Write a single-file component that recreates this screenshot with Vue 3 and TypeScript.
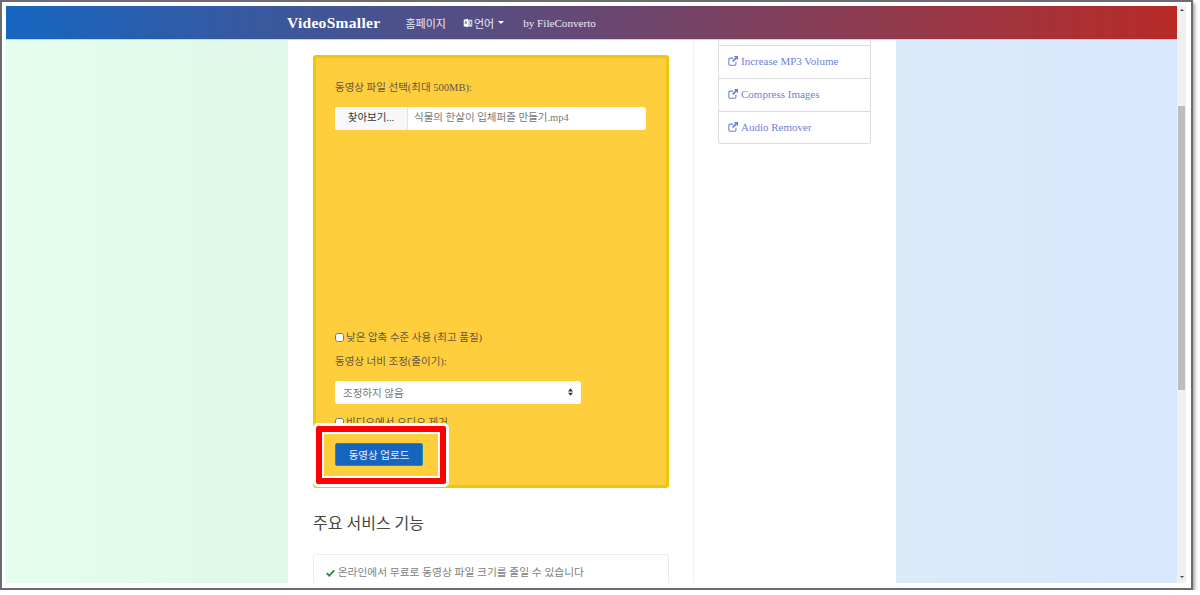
<script setup lang="ts">
const links: string[] = ['Increase MP3 Volume', 'Compress Images', 'Audio Remover']
</script>

<template>
  <div class="window">
    <div class="viewport">
      <div class="page">
        <nav class="navbar">
          <a class="brand">VideoSmaller</a>
          <a class="nav-link home">홈페이지</a>
          <a class="nav-link lang">
            <svg class="lang-icon" viewBox="0 0 14 12" width="10" height="10">
              <path d="M1 1.5 7 0v12L1 10.5z" fill="#fff" />
              <path d="M7 1.5h6v9.5H7z" fill="#d9dcec" />
              <path d="M2.6 7.6 4 3.4l1.4 4.2M9 4.4h3M11 4.4c-.2 2-1 3.4-2 4M9.8 5.6c.5 1.3 1.2 2.2 2.4 2.8" fill="none" stroke="#4a4470" stroke-width=".9" />
            </svg>
            언어
            <span class="caret"></span>
          </a>
          <a class="nav-link by">by FileConverto</a>
        </nav>
        <div class="columns">
          <div class="side-left"></div>
          <div class="center">
            <main class="main">
              <form class="card" @submit.prevent>
                <label class="label first">동영상 파일 선택(최대 500MB):</label>
                <div class="file-input">
                  <span class="browse">찾아보기...</span>
                  <span class="file-name">식물의 한살이 입체퍼즐 만들기.mp4</span>
                </div>
                <label class="check-row low">
                  <input type="checkbox" class="check" />
                  <span>낮은 압축 수준 사용 (최고 품질)</span>
                </label>
                <label class="label width">동영상 너비 조정(줄이기):</label>
                <div class="select">
                  <span>조정하지 않음</span>
                  <svg viewBox="0 0 8 12" width="5" height="8"><path d="M4 0 8 5H0zM4 12 0 7h8z" fill="#333" /></svg>
                </div>
                <label class="check-row audio">
                  <input type="checkbox" class="check" />
                  <span>비디오에서 오디오 제거</span>
                </label>
                <button class="upload" type="button">동영상 업로드</button>
              </form>
              <h2 class="heading">주요 서비스 기능</h2>
              <div class="feature">
                <svg class="tick" viewBox="0 0 12 10" width="9" height="8"><path d="M1 5.2 4.4 8.6 11 1.6" fill="none" stroke="#1e8e3e" stroke-width="2.4" /></svg>
                온라인에서 무료로 동영상 파일 크기를 줄일 수 있습니다
              </div>
            </main>
            <aside class="aside">
              <ul class="list">
                <li class="stub"></li>
                <li v-for="link in links" :key="link" class="item">
                  <svg class="ext" viewBox="0 0 12 12" width="10" height="10">
                    <path d="M9.5 7v2.6A1.4 1.4 0 0 1 8.1 11H2.4A1.4 1.4 0 0 1 1 9.6V3.9a1.4 1.4 0 0 1 1.4-1.4H6" fill="none" stroke="#6f80d8" stroke-width="1.3" />
                    <path d="M7 0h5v5l-1.7-1.7L6.4 7.2 4.8 5.6l3.9-3.9z" fill="#6f80d8" />
                  </svg>
                  {{ link }}
                </li>
              </ul>
            </aside>
          </div>
          <div class="side-right"></div>
        </div>
      </div>
      <div class="scrollbar">
        <span class="arrow up"></span>
        <span class="thumb"></span>
        <span class="arrow down"></span>
      </div>
    </div>
    <div class="highlight"></div>
  </div>
</template>

<style>
html, body { margin: 0; background: #fff; overflow: hidden; }
</style>

<style scoped>
.window {
  position: relative;
  box-sizing: border-box;
  width: 1193px;
  height: 590px;
  padding: 4px 5px 5px 4px;
  background: #fff;
  border: 2px solid #6b6b70;
  box-shadow: 2px 3px 3px rgba(0, 0, 0, .35);
  font-family: "Liberation Serif", "Noto Sans CJK KR", serif;
}
.viewport { display: flex; height: 577px; overflow: hidden; }
.page { width: 1171px; height: 100%; overflow: hidden; display: flex; flex-direction: column; }
.navbar {
  flex: none;
  display: flex;
  align-items: center;
  height: 33px;
  padding-left: 281px;
  border-bottom: 1px solid #c9d3ea;
  background: linear-gradient(90deg, #1565c0, #b92b27);
  color: #fff;
}
.brand { font-size: 15.5px; font-weight: 700; margin-right: 25px; letter-spacing: .3px; }
.nav-link { font-size: 11px; color: #eceaf2; display: flex; align-items: center; gap: 1px; }
.home { margin-right: 17px; }
.lang { margin-right: 19px; }
.by { font-size: 11.15px; }
.caret { width: 0; height: 0; margin-left: 3px; border: 3px solid transparent; border-top-color: #fff; border-bottom: 0; }
.columns { flex: 1; min-height: 0; display: grid; grid-template-columns: 282px 608px 281px; }
.side-left { background: linear-gradient(90deg, #e4fdec, #e0f8ea); }
.side-right { background: linear-gradient(90deg, #d9ebf9, #d7e7fe); }
.center { display: grid; grid-template-columns: 406px 202px; background: #fff; min-height: 0; overflow: hidden; }
.main { padding: 15px 24px 0 25px; border-right: 1px solid #efefef; }
.card {
  box-sizing: border-box;
  height: 433px;
  padding: 0 19px;
  display: flex;
  flex-direction: column;
  align-items: flex-start;
  border: 3px solid #f1c40f;
  border-radius: 3px;
  background: #ffce3d;
  color: #5f5640;
  font-size: 10.5px;
}
.label { display: block; line-height: 14px; }
.first { margin-top: 23px; }
.file-input {
  display: flex;
  width: 311px;
  height: 23px;
  margin-top: 12px;
  border-radius: 3px;
  overflow: hidden;
  background: #fff;
  line-height: 22px;
}
.browse { width: 72px; background: #f7f8fa; color: #333; text-align: center; border-right: 1px solid #e6e6e6; }
.file-name { padding-left: 6px; color: #777; }
.check-row { display: flex; align-items: center; gap: 1px; line-height: 14px; }
.check { width: 9px; height: 9px; margin: -1px 1px 0 0; }
.low { margin-top: 201px; }
.width { margin-top: 10px; }
.select {
  box-sizing: border-box;
  display: flex;
  align-items: center;
  justify-content: space-between;
  width: 246px;
  height: 23px;
  margin-top: 12px;
  padding: 0 8px 1px;
  border-radius: 3px;
  background: #fff;
  color: #777;
}
.audio { margin-top: 12px; }
.upload {
  width: 88px;
  height: 23px;
  margin-top: 13px;
  padding: 0;
  border: 1px solid #1e8fa8;
  border-radius: 2px;
  background: #1565c0;
  color: #eef;
  font: inherit;
}
.heading { margin: 26px 0 20px; font-size: 16px; line-height: 20px; font-weight: 400; color: #444; }
.feature {
  height: 40px;
  padding: 10px 12px;
  box-sizing: border-box;
  border: 1px solid #ececec;
  border-radius: 3px;
  font-size: 10.75px;
  line-height: 14px;
  color: #808080;
}
.tick { vertical-align: -1px; }
.aside { padding: 0 0 0 24px; }
.list { box-sizing: border-box; width: 153px; margin: 0; padding: 0; list-style: none; border: 1px solid #ddd; border-top: 0; border-radius: 0 0 3px 3px; }
.stub { height: 5px; }
.item {
  box-sizing: border-box;
  height: 33px;
  padding: 0 9px 2px;
  display: flex;
  align-items: center;
  gap: 3px;
  border-top: 1px solid #ddd;
  font-size: 11px;
  color: #6f80d8;
}
.item:last-child { height: 32px; }
.scrollbar { flex: 1; position: relative; background: #f0f0f0; }
.thumb { position: absolute; left: 1px; right: 1px; top: 100px; height: 284px; background: #bdbdbd; }
.arrow { position: absolute; left: 3px; border: 2.5px solid transparent; }
.up { top: 3px; border-bottom-color: #444; border-top: 0; }
.down { bottom: 5px; border-top-color: #444; border-bottom: 0; }
.highlight {
  position: absolute;
  left: 314px;
  top: 424px;
  width: 130px;
  height: 58px;
  box-sizing: border-box;
  border: 6px solid #f00;
  border-radius: 2px;
  box-shadow: 0 0 0 3px #fff, inset 0 0 0 2px #fff;
}
</style>
